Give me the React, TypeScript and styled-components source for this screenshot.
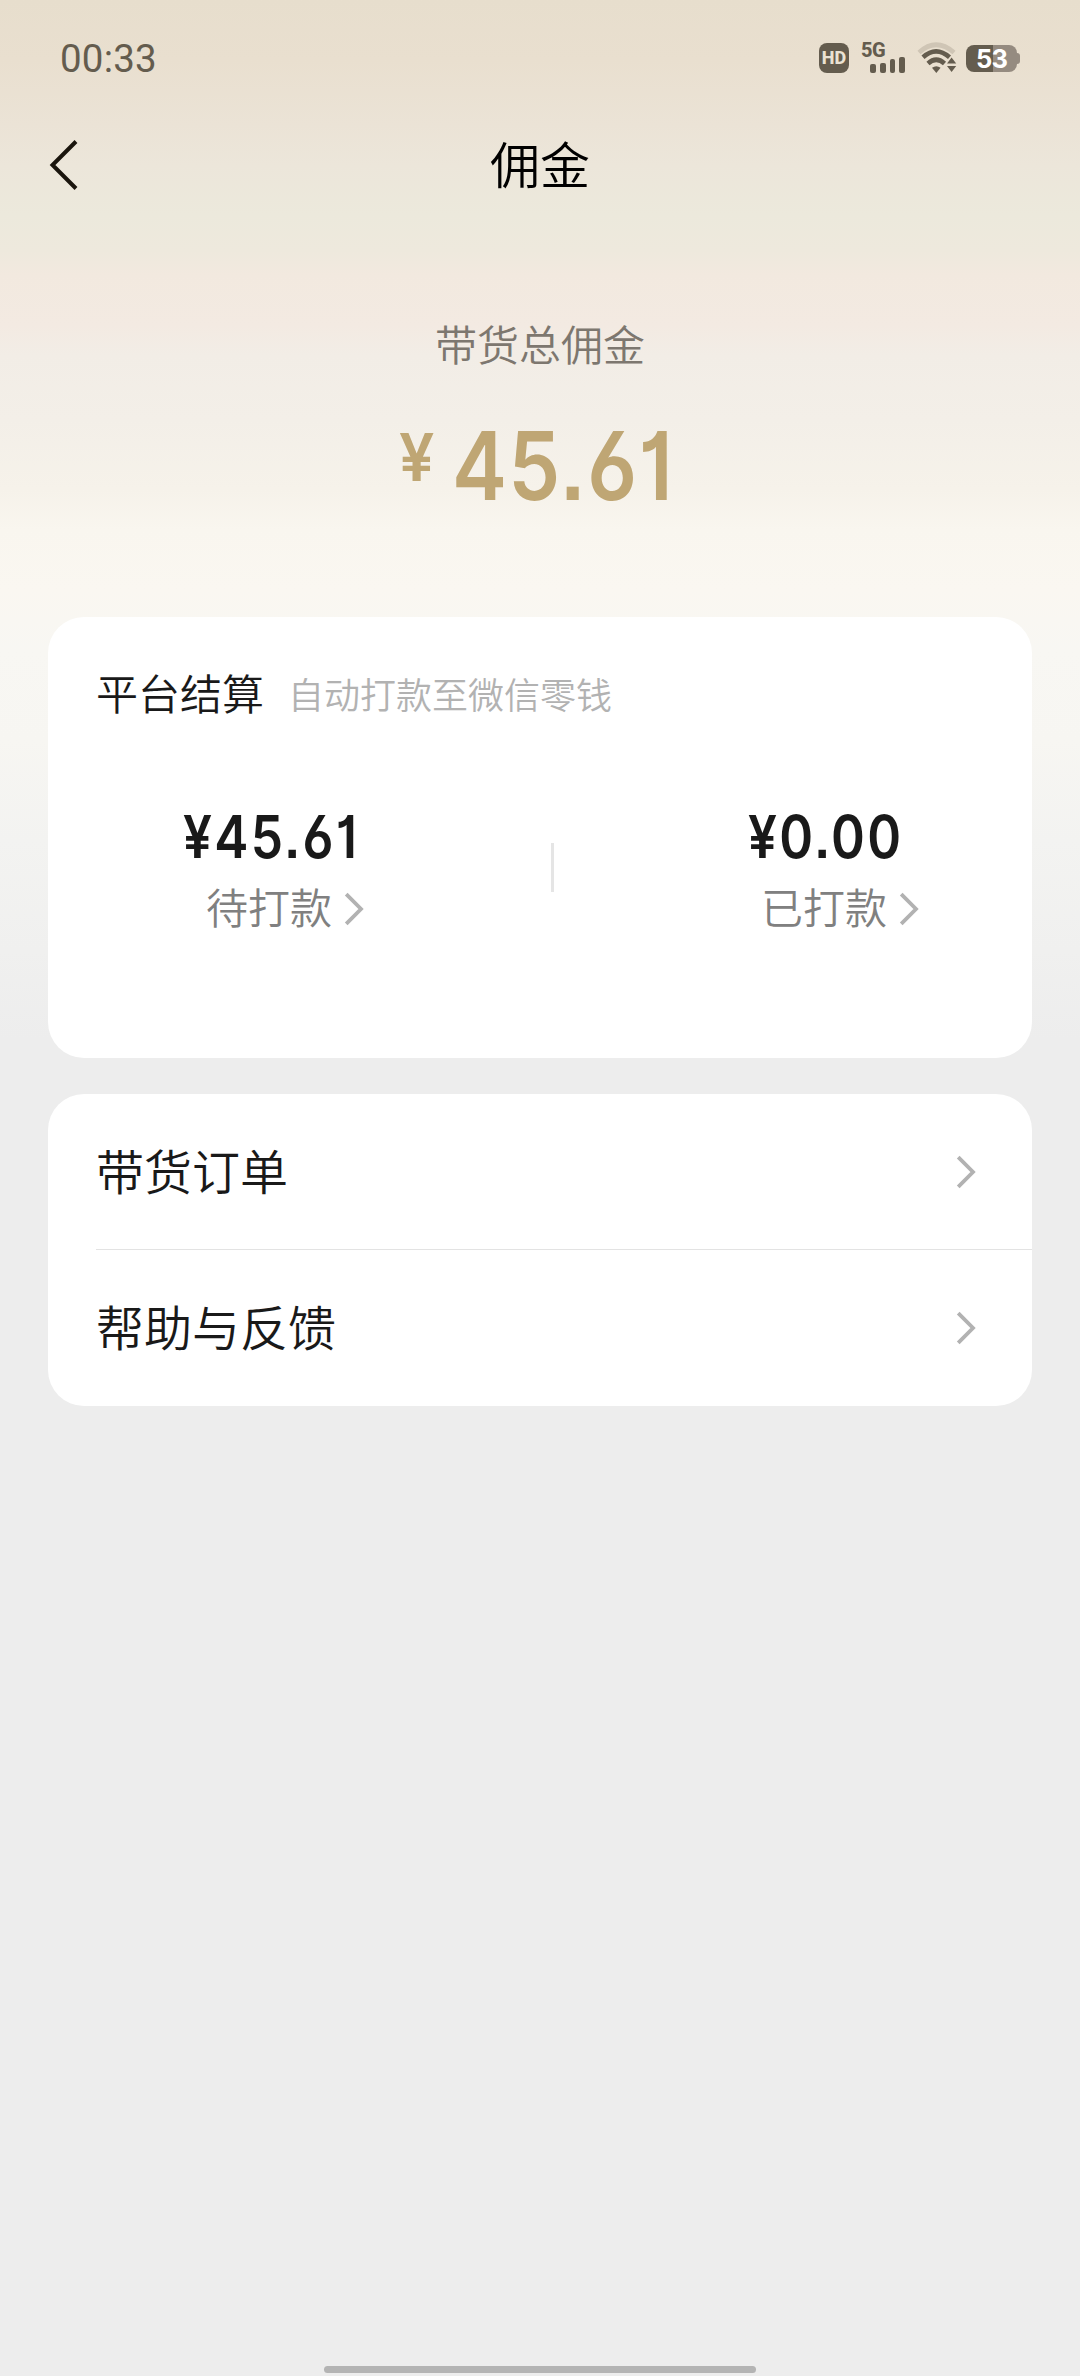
import React from "react";
import styled, { createGlobalStyle } from "styled-components";

const GlobalStyle = createGlobalStyle`
  html, body { margin: 0; padding: 0; background: #ededed; }
  * { box-sizing: border-box; }
`;

const Page = styled.main`
  display: flex;
  flex-direction: column;
  width: 1080px;
  height: 2376px;
  overflow: hidden;
  font-family: "Noto Sans CJK SC", sans-serif;
  font-weight: 350;
  color: #191919;
  background: linear-gradient(
    180deg,
    #e7decd 0px,
    #e9dfcf 60px,
    #ebe3d6 125px,
    #ece6da 165px,
    #ece9dc 215px,
    #eee9dd 250px,
    #f2e9df 275px,
    #f3eae2 325px,
    #f2ede6 355px,
    #f3efe8 420px,
    #f6f2ea 490px,
    #f9f6ef 530px,
    #faf7f1 590px,
    #f8f7f3 650px,
    #f7f6f2 740px,
    #f3f3f1 840px,
    #f0f0ef 950px,
    #ededed 1040px,
    #ededed 2376px
  );
`;

const StatusBar = styled.header`
  display: flex;
  align-items: center;
  justify-content: space-between;
  height: 116px;
  padding: 0 60px;
`;

const Clock = styled.time`
  padding-top: 2px;
  font: 400 38.5px/44px Roboto, sans-serif;
  letter-spacing: 0.2px;
  color: #645c4e;
`;

const StatusIcons = styled.div`
  display: flex;
  align-items: center;
`;

const HdBadge = styled.span`
  width: 30px;
  height: 30px;
  border-radius: 8px;
  background: #645c4e;
  color: #ebe2d3;
  font: 800 18px/30px Roboto, sans-serif;
  text-align: center;
`;

const Signal = styled.div`
  display: flex;
  flex-direction: column;
  width: 44px;
  height: 30px;
  margin-left: 12px;
`;

const Network = styled.span`
  font: 800 20px/14px Roboto, sans-serif;
  letter-spacing: -0.5px;
  color: #645c4e;
`;

const Bars = styled.div`
  display: flex;
  align-items: flex-end;
  gap: 4px;
  height: 16px;
  padding-left: 9px;
`;

const Bar = styled.i<{ $h: number }>`
  width: 5.8px;
  height: ${(p) => p.$h}px;
  border-radius: 2px;
  background: #645c4e;
`;

const Wifi = styled.svg`
  width: 40px;
  height: 32px;
  margin-left: 12px;
`;

const Battery = styled.div`
  display: flex;
  align-items: center;
  margin-left: 9px;
  padding-top: 1px;
`;

const BatteryBody = styled.span`
  width: 51px;
  height: 27px;
  border-radius: 8px;
  background: linear-gradient(90deg, #645c4e 27px, #958b80 27px);
  color: #fff;
  font: 700 25.5px/28px Inter, sans-serif;
  letter-spacing: -1px;
  text-align: center;
`;

const BatteryTip = styled.i`
  width: 3px;
  height: 11px;
  border-radius: 0 3px 3px 0;
  background: #958b80;
`;

const NavBar = styled.nav`
  display: grid;
  grid-template-columns: 90px 1fr 90px;
  align-items: center;
  height: 98px;
`;

const BackIcon = styled.svg`
  width: 32px;
  height: 54px;
  margin-left: 48px;
`;

const Title = styled.h1`
  margin: 0;
  padding-bottom: 6px;
  font-size: 50px;
  line-height: 60px;
  font-weight: inherit;
  text-align: center;
  color: #000;
`;

const Hero = styled.section`
  display: flex;
  flex-direction: column;
  align-items: center;
  height: 403px;
  padding-top: 99px;
`;

const HeroLabel = styled.div`
  font-size: 42px;
  line-height: 60px;
  color: #7d776f;
`;

const HeroAmount = styled.div`
  display: flex;
  align-items: flex-start;
  width: 282px;
  margin-top: 45px;
  color: #bfa674;
`;

const Digits = styled.span<{ $size: number; $squeeze: number; $width: number; $spacing?: number }>`
  display: block;
  width: ${(p) => p.$width}px;
  font: 600 ${(p) => p.$size}px/${(p) => p.$size}px Inter, sans-serif;
  font-feature-settings: "cv01" 1, "cv03" 1, "ss07" 1;
  letter-spacing: ${(p) => p.$spacing ?? 0}px;
  white-space: nowrap;
  transform: scaleX(${(p) => p.$squeeze});
  transform-origin: left center;
`;

const CurrencySign = styled(Digits)`
  margin-top: 6px;
`;

const Card = styled.section`
  flex: none;
  margin: 0 48px 36px;
  border-radius: 36px;
  background: #fff;
`;

const Settlement = styled(Card)`
  height: 441px;
`;

const CardHeader = styled.div`
  display: flex;
  align-items: center;
  gap: 24px;
  height: 152px;
  padding-left: 48px;
`;

const CardTitle = styled.h2`
  margin: 0;
  padding-bottom: 3px;
  font-size: 42px;
  line-height: 60px;
  font-weight: inherit;
`;

const CardNote = styled.span`
  font-size: 36px;
  line-height: 60px;
  color: #b2b2b2;
`;

const Columns = styled.div`
  display: grid;
  grid-template-columns: 503px 3px 1fr;
  padding-top: 38px;
`;

const Separator = styled.i`
  width: 3px;
  height: 49px;
  margin-top: 36px;
  background: #e5e5e5;
`;

const Column = styled.div<{ $left: number }>`
  display: flex;
  flex-direction: column;
  gap: 10px;
  padding-left: ${(p) => p.$left}px;
`;

const ColumnLabel = styled.div<{ $indent: number }>`
  display: flex;
  align-items: center;
  gap: 12px;
  padding-left: ${(p) => p.$indent}px;
  font-size: 42px;
  line-height: 60px;
  color: #808080;

  & > svg {
    margin-top: 6px;
  }
`;

const Chevron = styled.svg`
  flex: none;
  width: 21px;
  height: 34px;
`;

const Row = styled.div`
  display: flex;
  align-items: center;
  justify-content: space-between;
  height: 156px;
  margin-left: 48px;
  padding-right: 55px;

  &:first-child {
    box-shadow: inset 0 -1px 0 #e3e3e3;
  }
`;

const RowLabel = styled.span`
  padding-bottom: 7px;
  font-size: 48px;
  line-height: 60px;
`;

const HomeIndicator = styled.div`
  width: 432px;
  height: 7px;
  margin: auto auto 3px;
  border-radius: 4px;
  background: #b4b4b4;
`;

const Arrow = () => (
  <Chevron viewBox="0 0 21 34" fill="none">
    <path d="M2.2 2.2 L17 17 L2.2 31.8" stroke="#b2b2b2" strokeWidth="3.8" />
  </Chevron>
);

const payouts = [
  { amount: "¥45.61", label: "待打款", left: 135, indent: 23, width: 172 },
  { amount: "¥0.00", label: "已打款", left: 194, indent: 13, width: 150 },
];

const Payout = ({ item }: { item: (typeof payouts)[number] }) => (
  <Column $left={item.left}>
    <Digits $size={59} $squeeze={0.87} $width={item.width} $spacing={2.6}>
      {item.amount}
    </Digits>
    <ColumnLabel $indent={item.indent}>
      {item.label}
      <Arrow />
    </ColumnLabel>
  </Column>
);

export default function App() {
  return (
    <>
      <GlobalStyle />
      <Page>
        <StatusBar>
          <Clock>00:33</Clock>
          <StatusIcons>
            <HdBadge>HD</HdBadge>
            <Signal>
              <Network>5G</Network>
              <Bars>
                {[9, 10.5, 14, 16].map((h) => (
                  <Bar key={h} $h={h} />
                ))}
              </Bars>
            </Signal>
            <Wifi viewBox="0 0 40 32" fill="none">
              <path d="M2 10.5 Q19 -5 37 10.5" stroke="#cfc5b5" strokeWidth="4.6" />
              <path d="M6 15.2 Q19 3.5 32.5 15.2" stroke="#645c4e" strokeWidth="4.6" />
              <path d="M11 21.5 Q19.2 14 27.5 21.5" stroke="#645c4e" strokeWidth="4.6" />
              <path d="M15 25.8 Q19.3 22.6 23.6 25.8 L19.3 31 Z" fill="#645c4e" />
              <path d="M30 21.5 L34.6 15.5 L39.2 21.5 Z M30 24 L39.2 24 L34.6 30 Z" fill="#645c4e" />
            </Wifi>
            <Battery>
              <BatteryBody>53</BatteryBody>
              <BatteryTip />
            </Battery>
          </StatusIcons>
        </StatusBar>
        <NavBar>
          <BackIcon viewBox="0 0 32 54" fill="none">
            <path d="M28 3.5 L4.5 27 L28 50.5" stroke="#1a150d" strokeWidth="4" />
          </BackIcon>
          <Title>佣金</Title>
        </NavBar>
        <Hero>
          <HeroLabel>带货总佣金</HeroLabel>
          <HeroAmount>
            <CurrencySign $size={66} $squeeze={0.95} $width={53}>
              ¥
            </CurrencySign>
            <Digits $size={95} $squeeze={0.87} $width={220} $spacing={1.5}>
              45.61
            </Digits>
          </HeroAmount>
        </Hero>
        <Settlement>
          <CardHeader>
            <CardTitle>平台结算</CardTitle>
            <CardNote>自动打款至微信零钱</CardNote>
          </CardHeader>
          <Columns>
            <Payout item={payouts[0]} />
            <Separator />
            <Payout item={payouts[1]} />
          </Columns>
        </Settlement>
        <Card>
          <Row>
            <RowLabel>带货订单</RowLabel>
            <Arrow />
          </Row>
          <Row>
            <RowLabel>帮助与反馈</RowLabel>
            <Arrow />
          </Row>
        </Card>
        <HomeIndicator />
      </Page>
    </>
  );
}
